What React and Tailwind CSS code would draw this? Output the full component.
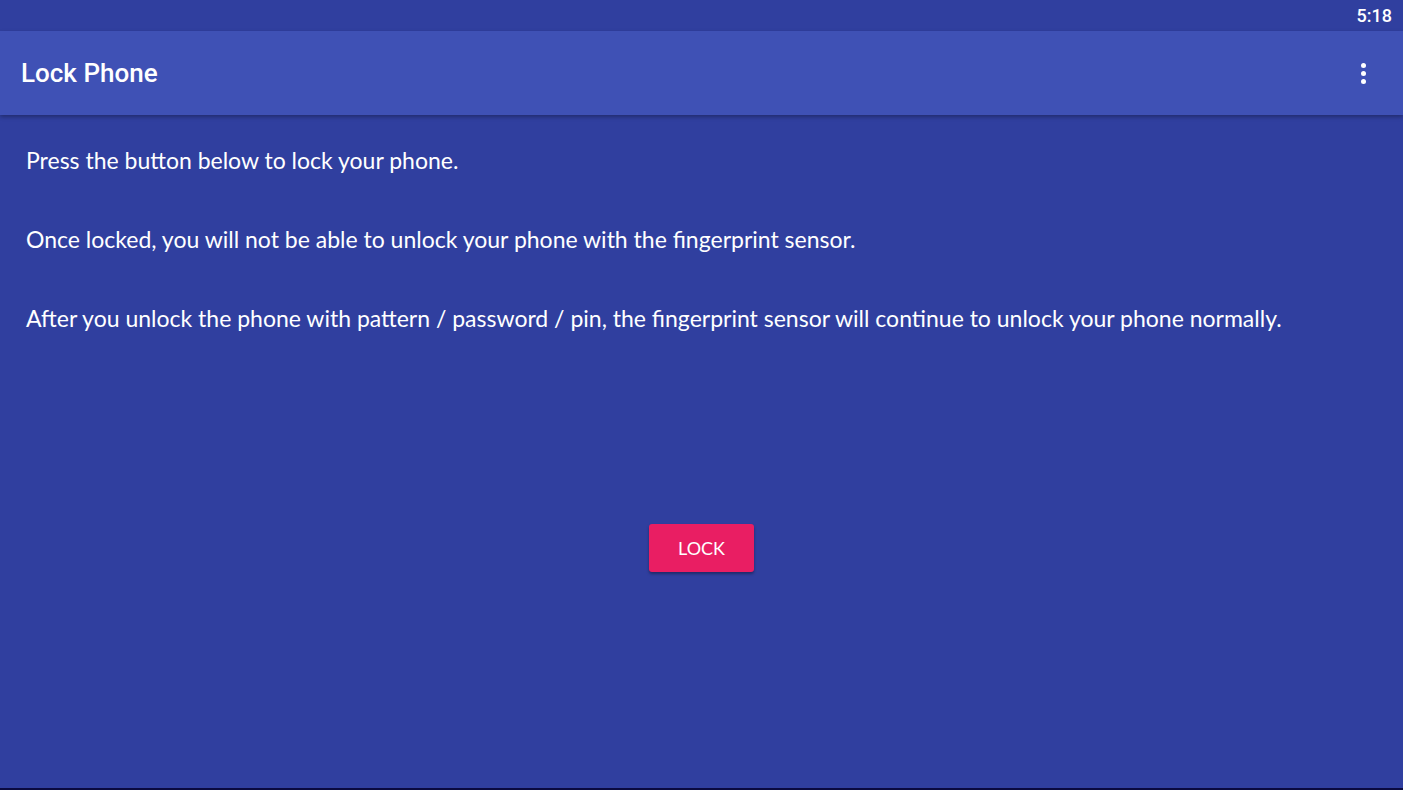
export default function App() {
  return (
    <div className="w-[1403px] h-[790px] flex flex-col bg-[#303f9f] overflow-hidden" style={{ fontFamily: "Roboto, sans-serif" }}>
      <div className="h-[31px] flex items-center justify-end pr-[11px] text-white text-[18px] font-medium">
        5:18
      </div>
      <div className="h-[84px] bg-[#3f51b5] flex items-center justify-between pl-[21px] pr-[37px] shadow-[0_2px_4px_rgba(0,0,0,0.3)] relative z-10">
        <h1 className="text-white text-[26px] font-medium">Lock Phone</h1>
        <div className="flex flex-col gap-[3px]">
          <span className="w-[5px] h-[5px] rounded-full bg-white" />
          <span className="w-[5px] h-[5px] rounded-full bg-white" />
          <span className="w-[5px] h-[5px] rounded-full bg-white" />
        </div>
      </div>
      <div className="flex-1 flex flex-col px-[26px] pt-[29px] text-white text-[23px]" style={{ fontFamily: "Lato, sans-serif" }}>
        <p className="leading-[32px]">Press the button below to lock your phone.</p>
        <p className="leading-[32px] mt-[47px]">Once locked, you will not be able to unlock your phone with the fingerprint sensor.</p>
        <p className="leading-[32px] mt-[47px]">After you unlock the phone with pattern / password / pin, the fingerprint sensor will continue to unlock your phone normally.</p>
        <div className="flex justify-center mt-[190px]">
          <button className="w-[105px] h-[48px] rounded-[3px] bg-[#e91e63] text-white text-[18px] shadow-[0_2px_3px_rgba(0,0,0,0.35)]">
            LOCK
          </button>
        </div>
      </div>
      <div className="h-[2px] bg-[#0a0a40]" />
    </div>
  );
}
